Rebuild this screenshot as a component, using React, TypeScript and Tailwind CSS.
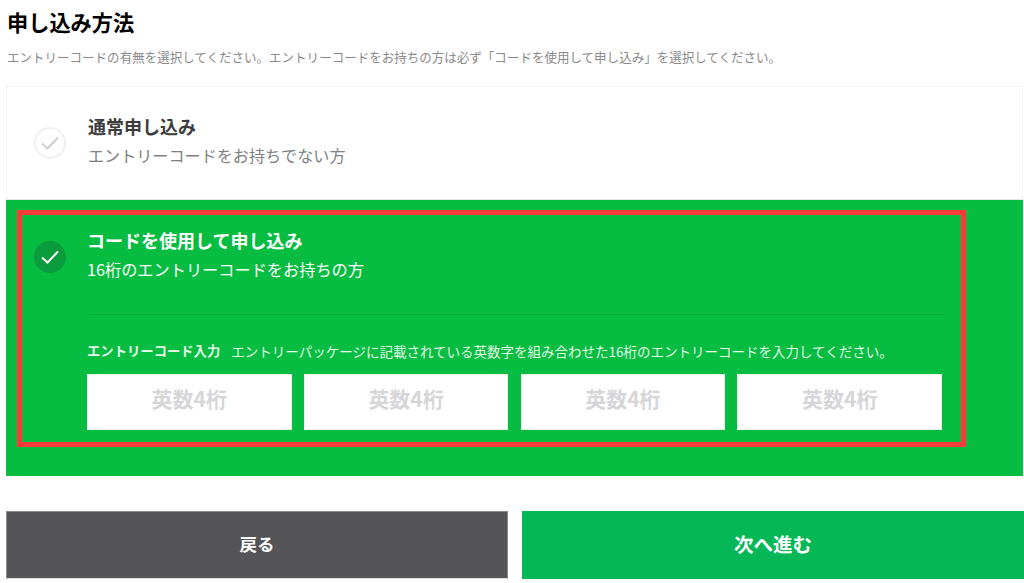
const font = "font-['Noto_Sans_CJK_JP','Liberation_Sans',sans-serif]"

function CheckCircle({ active }: { active?: boolean }) {
  return (
    <span
      className={
        active
          ? 'flex h-8 w-8 shrink-0 items-center justify-center rounded-full bg-[#0a9b3c]'
          : 'flex h-8 w-8 shrink-0 items-center justify-center rounded-full border-2 border-[#f0f0f0] bg-white'
      }
    >
      <svg width="20" height="16" viewBox="0 0 20 16" fill="none">
        <path
          d="M2 8.5 L7.5 13.5 L18 2.5"
          stroke={active ? '#ffffff' : '#cfcfcf'}
          strokeWidth="2"
        />
      </svg>
    </span>
  )
}

function CodeInput() {
  return (
    <input
      type="text"
      placeholder="英数4桁"
      className="h-[56px] w-[204.5px] border border-[#e8f5ea] bg-white pb-[8px] text-center text-[21px] font-bold outline-none placeholder:text-[#d6d6d8]"
    />
  )
}

export default function App() {
  return (
    <div className={`${font} h-[583px] w-[1024px] overflow-hidden bg-white pl-[6px]`}>
      <h1 className="h-[48px] pt-[7px] pl-px text-[21.2px] leading-[30px] font-bold text-black">申し込み方法</h1>
      <p className="h-[32px] pl-px text-[12.53px] leading-[18px] text-[#8a8a8a]">
        エントリーコードの有無を選択してください。エントリーコードをお持ちの方は必ず「コードを使用して申し込み」を選択してください。
      </p>

      <section className="mt-[6px] w-[1017px]">
        <div className="flex h-[113px] border border-b-0 border-[#f3f3f3] bg-white pl-[27px]">
          <div className="pt-[40px]">
            <CheckCircle />
          </div>
          <div className="pt-[26px] pl-[22px]">
            <p className="text-[18px] leading-[26px] font-bold text-[#3c3c3c]">通常申し込み</p>
            <p className="mt-[3px] text-[16.1px] leading-[26px] text-[#7f7f7f]">エントリーコードをお持ちでない方</p>
          </div>
        </div>

        <div className="h-[277px] border-t border-[#e4e4e4] bg-[#06bd41] pt-[10px] pl-[11px]">
          <div className="h-[237px] w-[949px] border-[5px] border-[#f73b3b] pl-[12px]">
            <div className="flex h-[99px] pt-[26px]">
              <CheckCircle active />
              <div className="-mt-[14px] pl-[21px]">
                <p className="text-[18px] leading-[26px] font-bold text-white">コードを使用して申し込み</p>
                <p className="mt-[3px] text-[16.2px] leading-[26px] text-white">16桁のエントリーコードをお持ちの方</p>
              </div>
            </div>

            <div className="ml-[53px] w-[857px] border-t border-[#05ad3b] pt-[26px]">
              <p className="flex h-[20px] gap-[11px] text-[13.33px] leading-[20px] text-[#e2f7e6]">
                <span className="font-bold">エントリーコード入力</span>
                <span className="text-[13.5px]">
                  エントリーパッケージに記載されている英数字を組み合わせた16桁のエントリーコードを入力してください。
                </span>
              </p>
              <div className="mt-[13px] flex w-[855px] justify-between">
                <CodeInput />
                <CodeInput />
                <CodeInput />
                <CodeInput />
              </div>
            </div>
          </div>
        </div>
      </section>

      <div className="mt-[35px] flex gap-[14px]">
        <button className="h-[68px] w-[502px] border border-[#8c8c8c] border-b-[#e0e0e0] bg-[#555557] pb-[2px] text-[17.5px] font-bold text-white">
          戻る
        </button>
        <button className="h-[68px] w-[502px] bg-[#05b757] pb-[2px] text-[19.5px] font-bold text-white">次へ進む</button>
      </div>
    </div>
  )
}
